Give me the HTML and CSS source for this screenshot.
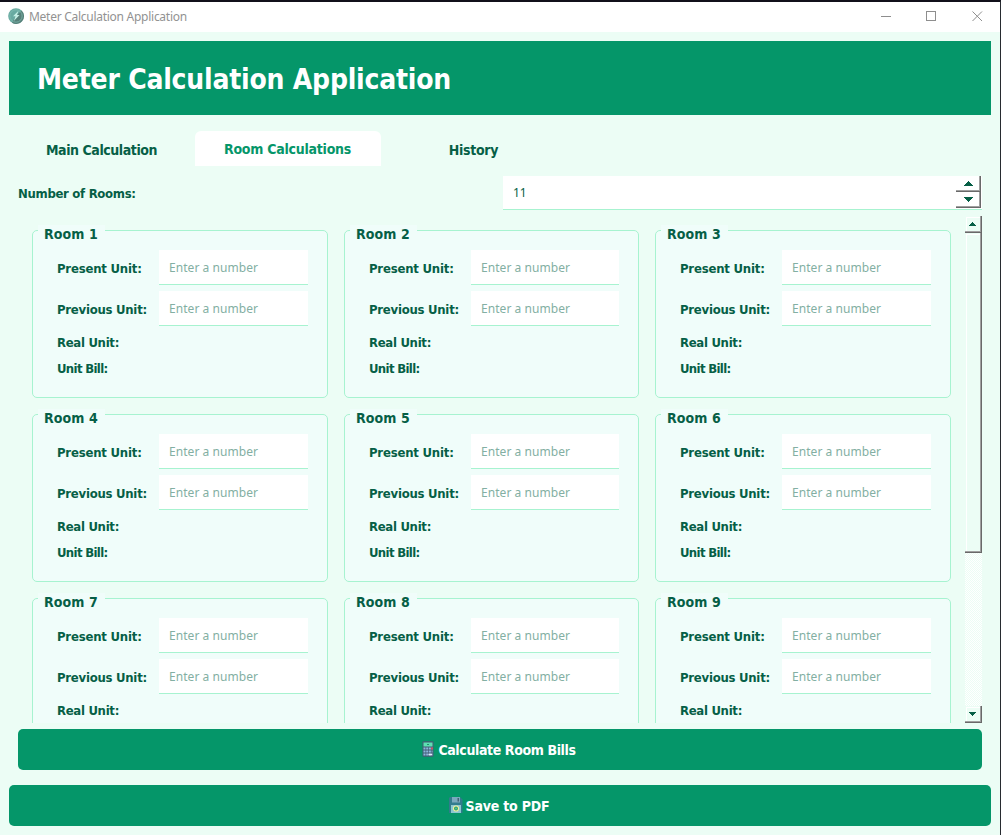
FILE: index.html
```html
<!DOCTYPE html>
<html lang="en">
<head>
<meta charset="utf-8">
<title>Meter Calculation Application</title>
<link rel="stylesheet" href="styles.css">
</head>
<body>
<div class="window">
  <div class="titlebar">
    <svg class="app-icon" width="16" height="16" viewBox="0 0 16 16"><circle cx="8" cy="8" r="7.8" fill="#68aaa1"/><path d="M13.6 2.5A7.8 7.8 0 0 1 4 14.7L8 8z" fill="#568079"/><circle cx="8" cy="8" r="6.2" fill="none" stroke="#82beb5" stroke-width=".7"/><path d="M10.500 2.800 5 8.300h2.500L5.800 13l5.700-6H9z" fill="#c4eee5"/></svg>
    <span class="window-title">Meter Calculation Application</span>
    <svg class="controls" width="103" height="12" viewBox="0 0 103 12" fill="none" stroke="#8e8e8e" shape-rendering="crispEdges"><path d="M0 6.500h10M45.500 1.500h9v9h-9z"/><path d="m91.500 1.500 9.500 9.500m0-9.500-9.500 9.500" shape-rendering="auto"/></svg>
  </div>
  <main class="app">
    <header class="banner"><h1>Meter Calculation Application</h1></header>
    <nav class="tabs">
      <div class="tab"><span class="t-main">Main Calculation</span></div>
      <div class="tab active"><span class="t-room">Room Calculations</span></div>
      <div class="tab"><span class="t-hist">History</span></div>
    </nav>
    <section class="panel">
      <div class="count-row">
        <label class="label count-label">Number of Rooms:</label>
        <div class="spin"><span class="spin-value">11</span>
          <div class="steppers">
            <div class="step"><svg width="9" height="5" viewBox="0 0 9 5" shape-rendering="crispEdges"><path d="M4 0h1v1h1v1h1v1h1v1h1v1H0V4h1V3h1V2h1V1h1z"/></svg></div>
            <div class="step"><svg width="9" height="5" viewBox="0 0 9 5" shape-rendering="crispEdges"><path d="M0 0h9v1H8v1H7v1H6v1H5v1H4V4H3V3H2V2H1V1H0z"/></svg></div>
          </div>
        </div>
      </div>
      <div class="scroll-area">
        <div class="rooms">
          <div class="room"><h2>Room 1</h2><span class="label present">Present Unit:</span><div class="input">Enter a number</div><span class="label previous">Previous Unit:</span><div class="input">Enter a number</div><span class="label real">Real Unit:</span><span class="label bill">Unit Bill:</span></div>
          <div class="room"><h2>Room 2</h2><span class="label present">Present Unit:</span><div class="input">Enter a number</div><span class="label previous">Previous Unit:</span><div class="input">Enter a number</div><span class="label real">Real Unit:</span><span class="label bill">Unit Bill:</span></div>
          <div class="room"><h2>Room 3</h2><span class="label present">Present Unit:</span><div class="input">Enter a number</div><span class="label previous">Previous Unit:</span><div class="input">Enter a number</div><span class="label real">Real Unit:</span><span class="label bill">Unit Bill:</span></div>
          <div class="room"><h2>Room 4</h2><span class="label present">Present Unit:</span><div class="input">Enter a number</div><span class="label previous">Previous Unit:</span><div class="input">Enter a number</div><span class="label real">Real Unit:</span><span class="label bill">Unit Bill:</span></div>
          <div class="room"><h2>Room 5</h2><span class="label present">Present Unit:</span><div class="input">Enter a number</div><span class="label previous">Previous Unit:</span><div class="input">Enter a number</div><span class="label real">Real Unit:</span><span class="label bill">Unit Bill:</span></div>
          <div class="room"><h2>Room 6</h2><span class="label present">Present Unit:</span><div class="input">Enter a number</div><span class="label previous">Previous Unit:</span><div class="input">Enter a number</div><span class="label real">Real Unit:</span><span class="label bill">Unit Bill:</span></div>
          <div class="room"><h2>Room 7</h2><span class="label present">Present Unit:</span><div class="input">Enter a number</div><span class="label previous">Previous Unit:</span><div class="input">Enter a number</div><span class="label real">Real Unit:</span></div>
          <div class="room"><h2>Room 8</h2><span class="label present">Present Unit:</span><div class="input">Enter a number</div><span class="label previous">Previous Unit:</span><div class="input">Enter a number</div><span class="label real">Real Unit:</span></div>
          <div class="room"><h2>Room 9</h2><span class="label present">Present Unit:</span><div class="input">Enter a number</div><span class="label previous">Previous Unit:</span><div class="input">Enter a number</div><span class="label real">Real Unit:</span></div>
        </div>
        <div class="scrollbar">
          <div class="bar-button"><svg width="7" height="4" viewBox="0 0 7 4" shape-rendering="crispEdges"><path d="M3 0h1v1h1v1h1v1h1v1H0V3h1V2h1V1h1z"/></svg></div>
          <div class="thumb"></div>
          <div class="track"></div>
          <div class="bar-button"><svg width="7" height="4" viewBox="0 0 7 4" shape-rendering="crispEdges"><path d="M0 0h7v1H6v1H5v1H4v1H3V3H2V2H1V1H0z"/></svg></div>
        </div>
      </div>
      <div class="button calculate">
        <svg width="12" height="16" viewBox="0 0 12 16"><rect x=".5" y=".3" width="11" height="15.400" rx="1" fill="#455c75"/><rect x="1.500" y="1.500" width="9" height="4" fill="#5ce0b2"/><path d="M5 3.500h2" stroke="#248d70"/><path d="M1.500 7.500h9M1.500 10.500h9M1.500 13.500h9" stroke="#8cb6dd" stroke-width="2" stroke-dasharray="2 .7"/><path d="M9 7.500h2" stroke="#c95461" stroke-width="2"/><path d="M6.500 13.500H10" stroke="#e1eef7" stroke-width="1.500"/></svg>
        <span class="b-calc">Calculate Room Bills</span>
      </div>
    </section>
    <div class="button save">
      <svg width="14" height="16" viewBox="0 0 14 16"><path d="M1 0h10l2.500 2.500V16H0V1z" fill="#327b8d"/><path d="M3 0h8v5.500H3z" fill="#7aa9bd"/><path d="M8.500 1h1.500v3.500H8.500z" fill="#426174"/><path d="M2 8h10v8H2z" fill="#8bc7d1"/><circle cx="7" cy="11.500" r="2.500" fill="#159660" stroke="#f0ef9a" stroke-width="1.200"/><path d="M7 10.500v2" stroke="#8ce4c8"/></svg>
      <span class="b-save">Save to PDF</span>
    </div>
  </main>
</div>
</body>
</html>
```
FILE: styles.css
```css
* { box-sizing: border-box; }
body { margin: 0; background: #ecfdf5; font-family: "DejaVu Sans Condensed", "DejaVu Sans", sans-serif; font-stretch: condensed; color: #065f46; }
h1, h2 { margin: 0; }
svg { display: block; flex: none; }
span, h1, h2, label { white-space: nowrap; }
.window { width: 1001px; height: 835px; overflow: hidden; border-top: 2px solid #11101a; border-right: 1px solid #272b30; background: #ecfdf5; }
.titlebar { height: 30px; background: #fff; display: flex; align-items: center; padding: 0 16px 0 8px; }
.app-icon { margin-top: -2px; }
.window-title { margin: -2px 0 0 5px; flex: 1; font: 12px "Noto Sans", sans-serif; letter-spacing: -.27px; color: #929292; }
.controls { margin-top: -2px; }
.app { padding: 9px 9px 0; }
.banner { height: 74px; background: #059669; padding: 0 28px; display: flex; align-items: center; }
h1 { color: #fff; font-size: 28px; line-height: 34px; margin-top: 4px; letter-spacing: -.22px; }
.tabs { margin-top: 16px; height: 35px; display: flex; }
.tab { width: 186px; display: flex; align-items: center; justify-content: center; font-size: 14px; font-weight: bold; padding: 2px 1px 0 0; }
.tab.active { background: #fff; border-radius: 6px 6px 0 0; color: #059669; padding-top: 0; }
.t-main { letter-spacing: -.43px; }
.t-room { letter-spacing: -.25px; }
.t-hist { letter-spacing: -.3px; }
.panel { padding: 10px 0 0 9px; width: 973px; }
.count-row { height: 34px; display: flex; align-items: center; }
.label { font-size: 13px; line-height: 18px; font-weight: bold; letter-spacing: -.3px; }
.count-label { width: 485px; padding-top: 2px; }
.spin { width: 479px; height: 34px; background: #fff; border-bottom: 1px solid #a7f3d0; display: flex; justify-content: space-between; }
.spin-value { font: 12px/33px "Noto Sans", sans-serif; padding-left: 10px; }
.steppers { width: 26px; padding-right: 1px; }
.step { height: 16px; border: solid #696969; border-width: 0 1px 1px 0; box-shadow: inset -1px -1px #a0a0a0; display: flex; align-items: center; justify-content: center; }
.step svg, .bar-button svg { fill: #065f46; }
.scroll-area { margin-top: 6px; height: 507px; overflow: hidden; display: flex; justify-content: space-between; }
.rooms { margin: 14px 0 0 14px; display: grid; grid-template-columns: 296px 295px 296px; grid-auto-rows: 168px; gap: 16px; }
.room { position: relative; border: 1px solid #a7f3d0; border-radius: 5px; background: #f0fdfa; padding: 19px 19px 0 24px; display: grid; grid-template-columns: 102px 1fr; grid-template-rows: 35px 35px 20px 20px; row-gap: 6px; align-items: center; align-content: start; }
h2 { position: absolute; left: 5px; top: -6px; width: 67px; padding-left: 6px; background: #f0fdfa; font-size: 14px; line-height: 18px; letter-spacing: .1px; }
.present, .previous { padding-top: 2px; }
.present { letter-spacing: -.2px; }
.previous { letter-spacing: -.25px; }
.real, .bill { grid-column: 1 / 3; padding-top: 2px; }
.bill { letter-spacing: -.65px; }
.input { height: 35px; background: #fff; border-bottom: 1px solid #a7f3d0; padding-left: 10px; font: 12px/36px "Noto Sans", sans-serif; letter-spacing: .06px; color: #83afa3; white-space: nowrap; }
.scrollbar { width: 17px; height: 507px; display: flex; flex-direction: column; }
.bar-button { height: 17px; display: flex; align-items: center; justify-content: center; padding-right: 2px; }
.bar-button, .thumb { border: solid #696969; border-width: 0 1px 1px 0; box-shadow: inset -1px -1px #a0a0a0, inset 1px 1px #ecfdf5, inset 2px 2px #fff; }
.thumb { height: 320px; }
.track { flex: 1; background: repeating-conic-gradient(#fff 0 25%, #ecfdf5 0 50%) 0 0 / 2px 2px; }
.button { height: 41px; background: #059669; color: #fff; border-radius: 5px; display: flex; align-items: center; justify-content: center; gap: 4px; font-size: 14px; font-weight: bold; padding-right: 2px; }
.calculate { width: 964px; margin-top: 6px; }
.b-calc { letter-spacing: -.38px; }
.save { margin-top: 15px; width: 982px; gap: 3px; }
.b-save { letter-spacing: -.2px; }
.calculate svg, .save svg { margin-top: -1px; }
```
